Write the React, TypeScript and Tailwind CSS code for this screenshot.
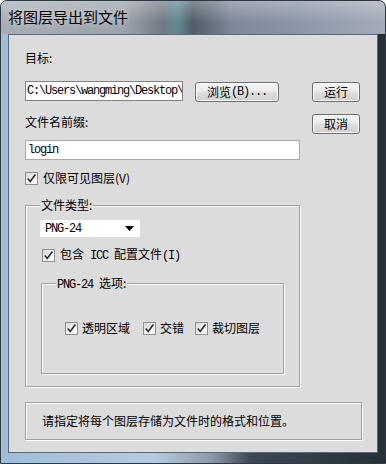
import React from "react";

const CJK = "font-['Noto_Sans_CJK_SC',sans-serif]";
const Mono = ({ children }: { children: React.ReactNode }) => (
  <span className="font-['Liberation_Mono','Noto_Sans_CJK_SC',monospace] tracking-[-1.2px] whitespace-pre">{children}</span>
);

const Check = () => (
  <div className="w-[13px] h-[13px] shrink-0 border border-[#8e8f8f] bg-[linear-gradient(135deg,#d8d8d8,#f7f7f7_70%,#ffffff)] flex items-center justify-center">
    <svg width="11" height="11" viewBox="0 0 11 11">
      <path d="M1.8 5.6 L4.2 8.4 L9.4 1.6" fill="none" stroke="#2a2a2a" strokeWidth="1.6" />
    </svg>
  </div>
);

const Btn = ({ children, className = "" }: { children: React.ReactNode; className?: string }) => (
  <div
    className={`h-[20px] rounded-[3px] border border-[#707070] bg-[linear-gradient(#f4f4f4,#ececec_45%,#dedede_50%,#d0d0d0)] shadow-[inset_0_0_0_1px_#fbfbfb] flex items-center justify-center text-[12px] leading-[14px] text-black ${className}`}
  >
    {children}
  </div>
);

export default function App() {
  return (
    <div
      className={`${CJK} w-[386px] h-[464px] flex flex-col overflow-hidden rounded-t-[7px] border border-[#2f3843] bg-[linear-gradient(90deg,#9fbcd8_0%,#b7cbde_40%,#8b98a7_55%,#3d4753_65%,#262f39_100%)]`}
    >
      <div className="h-[33px] shrink-0 pl-[7px] flex items-center bg-[linear-gradient(180deg,rgba(255,255,255,0.28),rgba(255,255,255,0)_65%),linear-gradient(90deg,#a7aeb6_0%,#9ca3ab_32%,#727a84_42%,#5e8a92_46%,#525c67_50%,#7e879a_60%,#8f98aa_80%,#a4abb8_100%)]">
        <span className="text-[15px] leading-[18px] text-black [text-shadow:0_0_6px_rgba(255,255,255,0.7)] -mt-[1px]">
          将图层导出到文件
        </span>
      </div>
      <div className="flex-1 mx-[7px] mb-[10px] border border-[#5f6975] bg-[#dcdcdc] pl-[16px] pt-[16px] text-[12px] leading-[14px] text-black">
        <div className="flex">
          <div className="w-[275px] flex flex-col">
            <div className="h-[14px]">目标:</div>
            <div className="mt-[16px] flex items-start">
              <div className="w-[158px] h-[20px] border border-[#7f8388] bg-white pl-[1px] overflow-hidden whitespace-nowrap flex items-center">
                <Mono>C:\Users\wangming\Desktop\</Mono>
              </div>
              <Btn className="ml-[12px] mt-[1px] w-[84px]">
                <span>浏览</span>
                <Mono>(B)...</Mono>
              </Btn>
            </div>
            <div className="mt-[13px] h-[14px]">文件名前缀:</div>
            <div className="mt-[11px] w-[275px] h-[20px] border border-[#a5abb5] bg-white pl-[2px] flex items-center">
              <Mono>login</Mono>
            </div>
            <div className="mt-[11px] h-[14px] flex items-center gap-[5px]">
              <Check />
              <span>仅限可见图层(V)</span>
            </div>
            <div className="relative mt-[20px] w-[275px] h-[182px] border border-[#a0a0a0] shadow-[1px_1px_0_#fff,inset_1px_1px_0_#fff] pl-[14px] pt-[14px] flex flex-col">
              <div className="absolute left-[14px] -top-[8px] bg-[#dcdcdc] px-[1px]">文件类型:</div>
              <div className="w-[100px] h-[17px] bg-white flex items-center justify-between pl-[5px] pr-[6px]">
                <Mono>PNG-24</Mono>
                <svg width="9" height="5" viewBox="0 0 9 5">
                  <path d="M0 0 H9 L4.5 5 Z" fill="#000" />
                </svg>
              </div>
              <div className="mt-[11px] ml-[2px] h-[14px] flex items-center gap-[5px]">
                <Check />
                <span>
                  包含<Mono>{" ICC "}</Mono>配置文件<Mono>(I)</Mono>
                </span>
              </div>
              <div className="relative mt-[21px] ml-[1px] w-[243px] h-[91px] border border-[#a0a0a0] shadow-[1px_1px_0_#fff,inset_1px_1px_0_#fff] pl-[23px] pt-[37px]">
                <div className="absolute left-[14px] -top-[8px] bg-[#dcdcdc] px-[1px]">
                  <Mono>{"PNG-24 "}</Mono>选项:
                </div>
                <div className="flex items-center h-[14px]">
                  <Check />
                  <span className="ml-[4px]">透明区域</span>
                  <div className="ml-[13px]">
                    <Check />
                  </div>
                  <span className="ml-[4px]">交错</span>
                  <div className="ml-[11px]">
                    <Check />
                  </div>
                  <span className="ml-[4px]">裁切图层</span>
                </div>
              </div>
            </div>
          </div>
          <div className="ml-[12px] pt-[31px] flex flex-col gap-[12px]">
            <Btn className="w-[48px]">运行</Btn>
            <Btn className="w-[48px] h-[19px]">取消</Btn>
          </div>
        </div>
        <div className="mt-[15px] w-[337px] h-[38px] border border-[#a0a0a0] shadow-[1px_1px_0_#fff,inset_1px_1px_0_#fff] pl-[16px] flex items-center">
          请指定将每个图层存储为文件时的格式和位置。
        </div>
      </div>
    </div>
  );
}
